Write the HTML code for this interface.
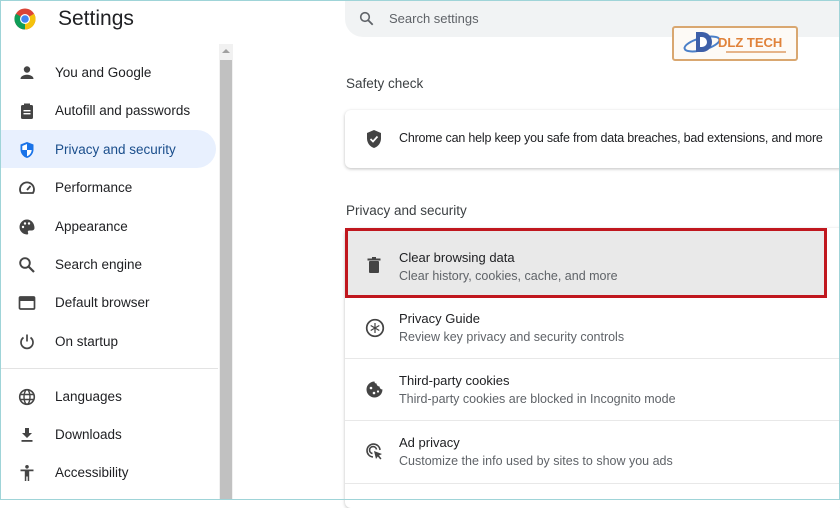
<!DOCTYPE html>
<html><head><meta charset="utf-8"><style>
*{margin:0;padding:0;box-sizing:border-box}
body{width:840px;height:500px;overflow:hidden;background:#fff;font-family:"Liberation Sans",sans-serif;position:relative;color:#202124}
.frame{position:absolute;inset:0;border:1px solid #9fd4d8;pointer-events:none;z-index:9}
.title{position:absolute;left:58px;top:7px;font-size:21px;color:#202124}
.nav{position:absolute;left:0;width:216px;height:38px;display:flex;align-items:center;font-size:13.5px;color:#202124}
.nav .ic{position:absolute;left:18px;top:11px;width:18px;height:18px}
.nav span{position:absolute;left:55px}
.nav.sel{background:#e8f0fe;border-radius:0 19px 19px 0;color:#1a4e8c}
.sb{position:absolute;left:219px;top:44px;width:14px;height:456px;background:#f1f1f1}
.thumb{position:absolute;left:220px;top:60px;width:12px;height:440px;background:#c1c1c1}
.search{position:absolute;left:345px;top:0;width:500px;height:37px;background:#f1f3f4;border-radius:0 0 0 18px}
.search span{position:absolute;left:44px;top:11px;font-size:13px;color:#5f6368}
.lbl{position:absolute;left:346px;font-size:13.5px;color:#3c4043}
.card{position:absolute;left:345px;width:500px;background:#fff;border-radius:6px;box-shadow:0 1px 3px rgba(0,0,0,.25)}
.row{position:absolute;left:0;width:495px;border-bottom:1px solid #e8e8e8}
.row .t{position:absolute;left:54px;font-size:13px;color:#202124;white-space:nowrap}
.row .s{position:absolute;left:54px;font-size:12.5px;color:#5f6368;white-space:nowrap}
.row svg{position:absolute;left:20px}
</style></head><body>
<div class="frame"></div>
<svg style="position:absolute;left:14px;top:8px" width="22" height="22" viewBox="0 0 22 22">
<circle cx="11" cy="11" r="10.5" fill="#db4437"/>
<path d="M11 11 L20.1 5.75 A10.5 10.5 0 0 1 11 21.5 Z" fill="#f4c20d"/>
<path d="M11 11 L11 21.5 A10.5 10.5 0 0 1 1.9 5.75 Z" fill="#0f9d58"/>
<circle cx="11" cy="11" r="5" fill="#fff"/><circle cx="11" cy="11" r="3.8" fill="#4285f4"/></svg>
<div class="title">Settings</div>

<div class="nav" style="top:53px"><svg class="ic" viewBox="0 0 18 18"><circle cx="9" cy="5.5" r="3.2" fill="#444"/><path d="M2.5 15c0-3 4-4.2 6.5-4.2S15.5 12 15.5 15z" fill="#444"/></svg><span>You and Google</span></div>
<div class="nav" style="top:91px"><svg class="ic" viewBox="0 0 18 18"><rect x="3" y="3" width="12" height="14" rx="1.5" fill="#444"/><rect x="6" y="1.5" width="6" height="3" fill="#444"/><rect x="5.5" y="8" width="7" height="1.4" fill="#fff"/><rect x="5.5" y="11" width="7" height="1.4" fill="#fff"/></svg><span>Autofill and passwords</span></div>
<div class="nav sel" style="top:130px"><svg class="ic" viewBox="0 0 18 18"><path d="M9 1L2.5 3.5v5C2.5 12.5 5.3 16 9 17c3.7-1 6.5-4.5 6.5-8.5v-5z" fill="#1a73e8"/><path d="M9 3v6H4.3v-4zM9 9h4.7c-.3 3-2.2 5.5-4.7 6.3z" fill="#fff"/></svg><span>Privacy and security</span></div>
<div class="nav" style="top:168px"><svg class="ic" viewBox="0 0 18 18"><path d="M3 14a7 7 0 1 1 12 0z" fill="none" stroke="#444" stroke-width="1.8"/><path d="M9 11l3.5-4" stroke="#444" stroke-width="1.8"/></svg><span>Performance</span></div>
<div class="nav" style="top:207px"><svg class="ic" viewBox="0 0 18 18"><path d="M9 1.5a7.5 7.5 0 0 0 0 15c1.2 0 1.5-1 1-2s0-2 1.5-2H14a2.5 2.5 0 0 0 2.5-2.5C16.5 5 13 1.5 9 1.5z" fill="#444"/><circle cx="5" cy="9" r="1.2" fill="#fff"/><circle cx="7" cy="5.5" r="1.2" fill="#fff"/><circle cx="11" cy="5.5" r="1.2" fill="#fff"/></svg><span>Appearance</span></div>
<div class="nav" style="top:245px"><svg class="ic" viewBox="0 0 18 18"><circle cx="7" cy="7" r="4.8" fill="none" stroke="#444" stroke-width="1.9"/><path d="M10.5 10.5l5.5 5.5" stroke="#444" stroke-width="2.2"/></svg><span>Search engine</span></div>
<div class="nav" style="top:283px"><svg class="ic" viewBox="0 0 18 18"><rect x="1.5" y="3" width="15" height="12" rx="1" fill="none" stroke="#444" stroke-width="1.7"/><rect x="1.5" y="3" width="15" height="4" fill="#444"/></svg><span>Default browser</span></div>
<div class="nav" style="top:322px"><svg class="ic" viewBox="0 0 18 18"><path d="M5.5 4.5a6 6 0 1 0 7 0" fill="none" stroke="#444" stroke-width="1.7"/><path d="M9 1.5v7" stroke="#444" stroke-width="1.7"/></svg><span>On startup</span></div>
<div style="position:absolute;left:0;top:368px;width:218px;height:1px;background:#e3e3e3"></div>
<div class="nav" style="top:377px"><svg class="ic" viewBox="0 0 18 18"><circle cx="9" cy="9" r="7.3" fill="none" stroke="#444" stroke-width="1.6"/><ellipse cx="9" cy="9" rx="3" ry="7.3" fill="none" stroke="#444" stroke-width="1.4"/><path d="M2 6.5h14M2 11.5h14" stroke="#444" stroke-width="1.4"/></svg><span>Languages</span></div>
<div class="nav" style="top:415px"><svg class="ic" viewBox="0 0 18 18"><path d="M7 2h4v5h3l-5 5-5-5h3z" fill="#444"/><rect x="3.5" y="14" width="11" height="1.8" fill="#444"/></svg><span>Downloads</span></div>
<div class="nav" style="top:453px"><svg class="ic" viewBox="0 0 18 18"><circle cx="9" cy="2.8" r="1.8" fill="#444"/><path d="M2.5 5.5h13v1.8h-4.3V17H9.7v-4.5H8.3V17H6.8V7.3H2.5z" fill="#444"/></svg><span>Accessibility</span></div>

<div class="sb"></div><div class="thumb"></div>
<div style="position:absolute;left:222px;top:49px;width:0;height:0;border-left:4px solid transparent;border-right:4px solid transparent;border-bottom:4px solid #a0a0a0"></div>

<div class="search"><svg style="position:absolute;left:14px;top:11px" width="15" height="15" viewBox="0 0 15 15"><circle cx="6" cy="6" r="4.3" fill="none" stroke="#5f6368" stroke-width="1.6"/><path d="M9.2 9.2l4.5 4.5" stroke="#5f6368" stroke-width="1.8"/></svg><span>Search settings</span></div>

<div style="position:absolute;left:672px;top:26px;width:126px;height:35px;border:2px solid #d9a770;border-radius:3px;background:#fdfaf6">
<svg style="position:absolute;left:8px;top:1px" width="40" height="30" viewBox="0 0 40 30"><ellipse cx="20" cy="15" rx="18" ry="6" fill="none" stroke="#4a7fc8" stroke-width="2" transform="rotate(-15 20 15)"/><path d="M14 3h6a10 10 0 0 1 0 20h-6z" fill="#3d5fa8"/><path d="M18 8h2a5 5 0 0 1 0 10h-2z" fill="#fff"/></svg>
<div style="position:absolute;left:44px;top:7px;font-weight:bold;font-size:13px;color:#e0823a;white-space:nowrap">DLZ TECH</div>
<div style="position:absolute;left:52px;top:23px;width:60px;height:2px;background:#e6b48a"></div></div>

<div class="lbl" style="top:76px">Safety check</div>
<div class="card" style="top:110px;height:58px">
<svg style="position:absolute;left:20px;top:19px" width="18" height="20" viewBox="0 0 18 20"><path d="M9 1L2 4v5.5c0 4.4 3 8.3 7 9.5 4-1.2 7-5.1 7-9.5V4z" fill="#444"/><path d="M5.5 10l2.5 2.5 4.5-5" fill="none" stroke="#fff" stroke-width="1.7"/></svg>
<div style="position:absolute;left:54px;top:21px;font-size:12.5px;letter-spacing:-0.2px;white-space:nowrap;color:#202124">Chrome can help keep you safe from data breaches, bad extensions, and more</div></div>

<div class="lbl" style="top:203px">Privacy and security</div>
<div class="card" style="top:228px;height:280px">
<div class="row" style="top:0;height:70px;background:#e9e9e9;border:3px solid #c0171e;left:0;width:482px">
<svg style="left:19px;top:26px" width="14" height="17" viewBox="0 0 14 17"><rect x="2" y="4" width="10" height="12" rx="1" fill="#444"/><rect x="0.5" y="1.5" width="13" height="2" fill="#444"/><rect x="5" y="0" width="4" height="2" fill="#444"/></svg>
<div class="t" style="left:51px;top:19px">Clear browsing data</div><div class="s" style="left:51px;top:38px">Clear history, cookies, cache, and more</div></div>
<div class="row" style="top:70px;height:61px">
<svg style="top:20px" width="20" height="20" viewBox="0 0 20 20"><circle cx="10" cy="10" r="8.3" fill="none" stroke="#444" stroke-width="1.7"/><path d="M10 5v10M5.7 7.5l8.6 5M5.7 12.5l8.6-5" stroke="#444" stroke-width="1.2"/></svg>
<div class="t" style="top:13px">Privacy Guide</div><div class="s" style="top:32px">Review key privacy and security controls</div></div>
<div class="row" style="top:131px;height:62px">
<svg style="top:21px" width="19" height="19" viewBox="0 0 19 19"><path d="M9.5 1.5a8 8 0 1 0 8 8 3 3 0 0 1-3-3 3 3 0 0 1-3-3 2 2 0 0 1-2-2z" fill="#444"/><circle cx="6" cy="8" r="1.3" fill="#fff"/><circle cx="9" cy="13" r="1.3" fill="#fff"/><circle cx="13" cy="11.5" r="1.1" fill="#fff"/></svg>
<div class="t" style="top:14px">Third-party cookies</div><div class="s" style="top:33px">Third-party cookies are blocked in Incognito mode</div></div>
<div class="row" style="top:193px;height:63px">
<svg style="top:21px" width="19" height="19" viewBox="0 0 19 19"><path d="M15 8a6.5 6.5 0 1 0-7 7" fill="none" stroke="#444" stroke-width="1.6"/><path d="M11.5 7.5a3.5 3.5 0 1 0-4 4" fill="none" stroke="#444" stroke-width="1.6"/><path d="M9 9l8 3-3 1.5 2.5 3-1.2 1-2.5-3L11 17z" fill="#444"/></svg>
<div class="t" style="top:14px">Ad privacy</div><div class="s" style="top:33px">Customize the info used by sites to show you ads</div></div>
</div>
</body></html>
